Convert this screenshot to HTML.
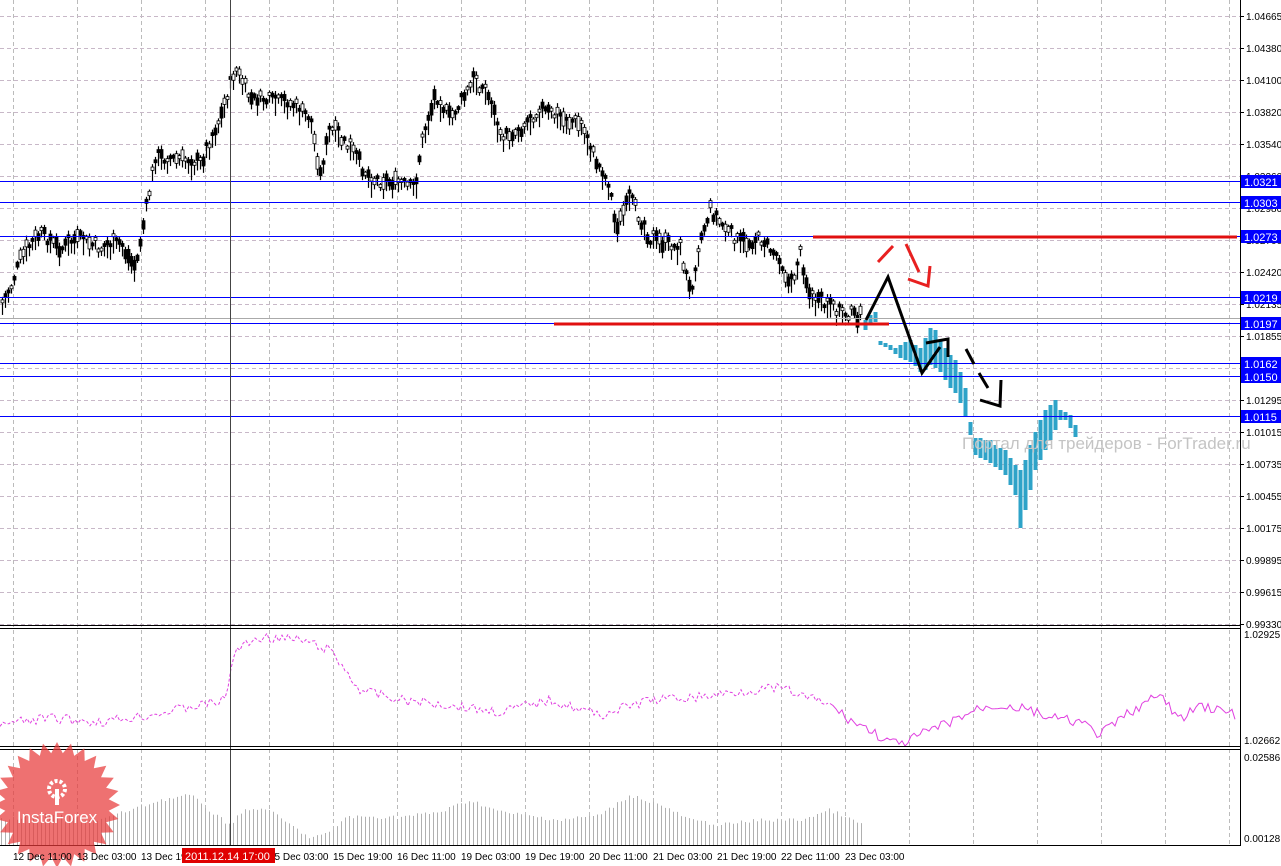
<!DOCTYPE html>
<html><head><meta charset="utf-8">
<style>
html,body{margin:0;padding:0;background:#fff;width:1281px;height:866px;overflow:hidden}
svg{display:block;font-family:"Liberation Sans",sans-serif}
</style></head><body>
<svg id="s" width="1281" height="866" xmlns="http://www.w3.org/2000/svg">
<rect width="1281" height="866" fill="#fff"/>
<g id="grid"></g>
<g id="vol"></g>
<g id="price"></g>
<g id="fc"></g>
<g stroke="#0000ff" stroke-width="1">
<line x1="0" y1="181.5" x2="1240" y2="181.5"/>
<line x1="0" y1="202.5" x2="1240" y2="202.5"/>
<line x1="0" y1="236.5" x2="1240" y2="236.5"/>
<line x1="0" y1="297.5" x2="1240" y2="297.5"/>
<line x1="0" y1="323.5" x2="1240" y2="323.5"/>
<line x1="0" y1="363.5" x2="1240" y2="363.5"/>
<line x1="0" y1="376.5" x2="1240" y2="376.5"/>
<line x1="0" y1="416.5" x2="1240" y2="416.5"/>
</g>
<line x1="0" y1="318.5" x2="1240" y2="318.5" stroke="#aaa"/>
<line x1="813" y1="237" x2="1237" y2="237" stroke="#e01010" stroke-width="3"/>
<line x1="554" y1="324" x2="889" y2="324" stroke="#e01010" stroke-width="3"/>
<g stroke="#e82020" stroke-width="3" fill="none">
<line x1="878" y1="262" x2="893" y2="246"/>
<line x1="906" y1="244" x2="919" y2="272"/>
<polyline points="908,279 928,286 930,266"/>
</g>
<g stroke="#000" stroke-width="3" fill="none">
<polyline points="866,320 888,277 922,373 940,347"/>
<polyline points="926,343 948,339 948,357"/>
<line x1="966" y1="349" x2="974" y2="364"/>
<line x1="979" y1="373" x2="988" y2="388"/>
<polyline points="980,400 1000,406 1001,380"/>
</g>
<text x="962" y="449" font-size="17" fill="#c4c4c4">Портал для трейдеров - ForTrader.ru</text>
<polyline id="ind1" fill="none" stroke="#e040e0" stroke-width="1" stroke-dasharray="3,2"/>
<polyline id="ind2" fill="none" stroke="#e040e0" stroke-width="1"/>
<line x1="230.5" y1="0" x2="230.5" y2="845" stroke="#444"/>
<g stroke="#000">
<line x1="0" y1="625.5" x2="1240" y2="625.5"/>
<line x1="0" y1="628.5" x2="1240" y2="628.5"/>
<line x1="0" y1="746.5" x2="1240" y2="746.5"/>
<line x1="0" y1="749.5" x2="1240" y2="749.5"/>
<line x1="0" y1="845.5" x2="1240" y2="845.5"/>
<line x1="1240.5" y1="0" x2="1240.5" y2="846"/>
</g>
<g transform="translate(57,805)">
<polygon id="star" fill="#e83a3a" fill-opacity="0.72"/>
<circle cx="0" cy="-16" r="8" fill="none" stroke="#fff" stroke-width="4" stroke-dasharray="3,2"/>
<rect x="-2" y="-16" width="4" height="16" fill="#fff"/>
<text x="0" y="18" font-size="17" fill="#fff" text-anchor="middle">InstaForex</text>
</g>
<g id="axis" font-size="10" fill="#000"></g>
<g id="taxis" font-size="10" fill="#000"></g>
<rect x="182" y="848" width="93" height="15" fill="#e00000"/>
<text x="185" y="860" font-size="11" fill="#fff">2011.12.14 17:00</text>
</svg>
<script>
var NS="http://www.w3.org/2000/svg";
function el(p,t,a,txt){var e=document.createElementNS(NS,t);for(var k in a)e.setAttribute(k,a[k]);if(txt)e.textContent=txt;document.getElementById(p).appendChild(e);return e;}
for(var x=13;x<1237;x+=64){el("grid","line",{x1:x+.5,y1:0,x2:x+.5,y2:845,stroke:"#bbb","stroke-dasharray":"4,3"});}
var labs=["1.04665","1.04380","1.04100","1.03820","1.03540","1.03260","1.02980","1.02700","1.02420","1.02135","1.01855","1.01575","1.01295","1.01015","1.00735","1.00455","1.00175","0.99895","0.99615","0.99330"];
for(var i=0;i<20;i++){var y=16+32*i;el("grid","line",{x1:0,y1:y+.5,x2:1240,y2:y+.5,stroke:"#c8b8c8","stroke-dasharray":"4,3"});
el("axis","line",{x1:1240,y1:y+.5,x2:1244,y2:y+.5,stroke:"#000"});
el("axis","text",{x:1246,y:y+4},labs[i]);}
el("axis","text",{x:1244,y:638},"1.02925");el("axis","text",{x:1244,y:744},"1.02662");
el("axis","text",{x:1244,y:761},"0.02586");el("axis","text",{x:1244,y:842},"0.00128");
var bl=[[181,"1.0321"],[202,"1.0303"],[236,"1.0273"],[297,"1.0219"],[323,"1.0197"],[363,"1.0162"],[376,"1.0150"],[416,"1.0115"]];
bl.forEach(function(b){el("axis","rect",{x:1241,y:b[0]-6,width:40,height:13,fill:"#0000ff"});el("axis","text",{x:1244,y:b[0]+5,fill:"#fff","font-size":"11"},b[1]);});
var tl=[[13,"12 Dec 11:00"],[77,"13 Dec 03:00"],[141,"13 Dec 19:00"],[269,"15 Dec 03:00"],[333,"15 Dec 19:00"],[397,"16 Dec 11:00"],[461,"19 Dec 03:00"],[525,"19 Dec 19:00"],[589,"20 Dec 11:00"],[653,"21 Dec 03:00"],[717,"21 Dec 19:00"],[781,"22 Dec 11:00"],[845,"23 Dec 03:00"]];
tl.forEach(function(t){el("taxis","text",{x:t[0],y:860},t[1]);});
function interp(pts,x){for(var i=0;i<pts.length-1;i++){if(x>=pts[i][0]&&x<=pts[i+1][0]){var f=(x-pts[i][0])/(pts[i+1][0]-pts[i][0]);return pts[i][1]+f*(pts[i+1][1]-pts[i][1]);}}return pts[pts.length-1][1];}
var seed=7;function rnd(){seed=(seed*9301+49297)%233280;return seed/233280;}
var P=[[0,310],[10,290],[20,260],[40,235],[60,250],[80,240],[100,250],[120,245],[135,270],[145,215],[155,160],[175,160],[200,165],[220,120],[235,70],[250,100],[290,105],[310,120],[320,175],[330,130],[350,150],[370,180],[400,185],[415,190],[420,150],[435,95],[450,120],[475,80],[490,100],[500,140],[520,130],[540,110],[560,120],[580,125],[595,160],[610,190],[615,230],[630,200],[650,240],[680,250],[690,295],[700,240],[710,210],[725,230],[740,245],[760,240],[780,260],[790,290],[800,255],[810,300],[830,310],[862,318]];
for(var x=2;x<=862;x+=3){var y=interp(P,x)+(rnd()-.5)*12;var h=8+rnd()*18;
el("price","line",{x1:x+.5,y1:y-h/2,x2:x+.5,y2:y+h/2,stroke:"#000","stroke-width":1.2});
el("price","rect",{x:x-1,y:y-h/3,width:3,height:Math.max(3,h*0.6*rnd()),fill:rnd()>.35?"#000":"#fff",stroke:"#000","stroke-width":.8});}
var F=[[865,320,330],[870,315,325],[875,312,322],[880,341,345],[885,343,347],[890,345,350],[895,348,354],[900,345,358],[905,342,360],[910,340,362],[915,345,366],[920,348,372],[925,338,370],[930,328,365],[935,330,368],[940,340,372],[945,348,380],[950,355,388],[955,360,393],[960,372,403],[965,388,416],[970,422,435],[975,438,455],[980,438,458],[985,440,460],[990,440,463],[995,445,467],[1000,448,470],[1005,450,475],[1010,458,485],[1015,465,495],[1020,470,528],[1025,460,510],[1030,445,490],[1035,432,470],[1040,420,460],[1045,410,450],[1050,405,440],[1055,400,430],[1060,410,420],[1065,412,420],[1070,415,428],[1075,425,437]];
F.forEach(function(f){el("fc","rect",{x:f[0]-1.5,y:f[1],width:4,height:f[2]-f[1],fill:"#2ea3c8"});});
var V=[[0,820],[40,815],[100,820],[160,800],[190,795],[215,815],[230,825],[240,812],[265,808],[290,825],[310,838],[330,833],[345,817],[400,817],[440,812],[470,800],[500,812],[560,820],[600,815],[630,795],[660,805],[690,820],[720,825],[760,820],[800,820],[830,810],[862,825]];
for(var x=1;x<862;x+=4){var y=interp(V,x)+(rnd()-.5)*4;el("vol","line",{x1:x+.5,y1:y,x2:x+.5,y2:845,stroke:"#b0b0b0"});}
var I=[[0,725],[50,718],[100,722],[150,715],[200,705],[225,700],[235,650],[260,637],[300,640],[330,650],[360,690],[400,700],[450,705],[500,712],[550,700],[600,715],[650,700],[700,697],[750,690],[780,688],[800,695],[830,705]];
var I2=[[830,705],[850,720],[870,730],[885,740],[900,745],[920,735],[950,722],[980,708],[1000,705],[1030,710],[1050,718],[1080,722],[1100,735],[1130,712],[1160,695],[1180,720],[1200,705],[1237,715]];
function pl(arr,n){var s="";for(var x=arr[0][0];x<=arr[arr.length-1][0];x+=3){s+=x+","+(interp(arr,x)+(rnd()-.5)*n).toFixed(1)+" ";}return s;}
document.getElementById("ind1").setAttribute("points",pl(I,10));
document.getElementById("ind2").setAttribute("points",pl(I2,10));
var s="",n=28;for(var i=0;i<2*n;i++){var r=i%2?52:63,a=Math.PI*i/n;s+=(r*Math.cos(a)).toFixed(1)+","+(r*Math.sin(a)).toFixed(1)+" ";}
document.getElementById("star").setAttribute("points",s);
</script>
</body></html>
